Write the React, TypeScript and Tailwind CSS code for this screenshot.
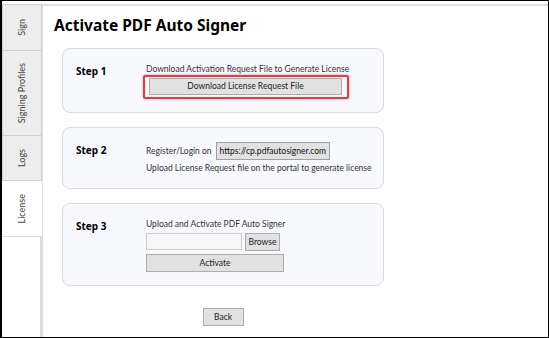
const tabs = [
  { label: "Sign", h: "h-[46px]" },
  { label: "Signing Profiles", h: "h-[85px]" },
  { label: "Logs", h: "h-[45px]" },
];

function WinButton({ children, className = "" }: { children: React.ReactNode; className?: string }) {
  return (
    <button
      className={`flex items-center justify-center whitespace-nowrap border border-[#adadad] bg-[#e1e1e1] text-[8.5px] leading-none text-[#222] ${className}`}
    >
      {children}
    </button>
  );
}

function StepCard({ step, className = "", children }: { step: string; className?: string; children: React.ReactNode }) {
  return (
    <div className={`flex w-[322px] rounded-[8px] border border-[#dadada] bg-[#f8f9fd] px-[13px] pt-[14px] pb-[13px] ${className}`}>
      <div className="w-[70px] shrink-0 text-[10px] font-bold leading-[16px] text-black" style={{ fontFamily: '"Noto Sans", sans-serif' }}>
        {step}
      </div>
      <div className="flex flex-col whitespace-nowrap text-[8.5px] text-[#333]">{children}</div>
    </div>
  );
}

export default function App() {
  return (
    <div
      className="flex h-[338px] w-[549px] overflow-hidden border border-l-2 border-black bg-white"
      style={{ fontFamily: 'Lato, "Noto Sans", sans-serif' }}
    >
      {/* Vertical tab strip */}
      <div className="flex w-[40px] shrink-0 flex-col pt-[3px]">
        {tabs.map((t) => (
          <div
            key={t.label}
            className={`flex ${t.h} items-center justify-center border border-b-0 border-[#cfcfcf] bg-[#ededed] first:border-t`}
          >
            <span className="rotate-180 text-[9px] text-[#444] [writing-mode:vertical-rl]">{t.label}</span>
          </div>
        ))}
        <div className="flex h-[56px] items-center justify-center border-t border-[#cfcfcf] bg-white">
          <span className="rotate-180 text-[9px] text-[#444] [writing-mode:vertical-rl]">License</span>
        </div>
        <div className="flex-1 border-t border-r-2 border-[#dcdcdc] bg-white" />
      </div>

      {/* Content */}
      <div className="mt-[3px] flex-1 border-t-2 border-l border-[#e0e0e0] pl-[11px]">
        <h1
          className="mt-[8px] text-[15.5px] font-bold leading-[22px] text-black"
          style={{ fontFamily: '"Noto Sans", sans-serif' }}
        >
          Activate PDF Auto Signer
        </h1>

        <div className="ml-[8px] mt-[12px] flex flex-col">
          <StepCard step="Step 1">
            <div className="leading-[12px]">Download Activation Request File to Generate License</div>
            <div className="-ml-[3px] w-[206px] rounded-[2px] border-2 border-[#e8393b] pt-[1px] pr-[5px] pb-[2px] pl-[4px] shadow-[0_0_3px_rgba(232,57,59,0.4)]">
              <WinButton className="h-[17px] w-full">Download License Request File</WinButton>
            </div>
          </StepCard>

          <StepCard step="Step 2" className="mt-[14px]">
            <div className="flex h-[18px] items-center gap-[4px]">
              <span>Register/Login on</span>
              <span className="flex h-[18px] items-center border border-[#a0a0a0] bg-[#e1e1e1] px-[3px] text-[#111]">
                https://cp.pdfautosigner.com
              </span>
            </div>
            <div className="mt-[1px] leading-[14px]">Upload License Request file on the portal to generate license</div>
          </StepCard>

          <StepCard step="Step 3" className="mt-[14px]">
            <div className="leading-[12px]">Upload and Activate PDF Auto Signer</div>
            <div className="mt-[3px] flex items-start gap-[3px]">
              <div className="h-[17px] w-[96px] border border-[#cccccc] bg-[#f6f6f6]" />
              <WinButton className="h-[18px] w-[35px]">Browse</WinButton>
            </div>
            <WinButton className="mt-[3px] h-[18px] w-[138px]">Activate</WinButton>
          </StepCard>

          <div className="flex w-[322px] justify-center pt-[22px]">
            <WinButton className="h-[18px] w-[41px]">Back</WinButton>
          </div>
        </div>
      </div>
    </div>
  );
}
